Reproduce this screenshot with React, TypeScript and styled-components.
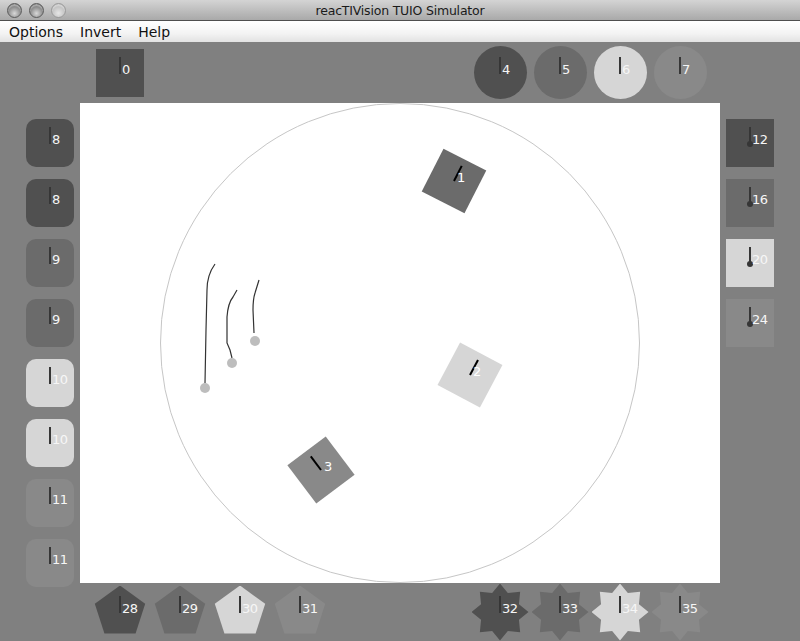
import styled, { createGlobalStyle, css } from "styled-components";

const GlobalStyle = createGlobalStyle`
  html, body {
    margin: 0;
    padding: 0;
  }
  body {
    width: 800px;
    height: 641px;
    overflow: hidden;
    background: #808080;
    font-family: "DejaVu Sans", sans-serif;
  }
`;

type Tone = "dark" | "mid" | "light" | "pale";
type Shape = "square" | "rounded" | "circle" | "pentagon" | "star";

const tones: Record<Tone, string> = {
  dark: "#505050",
  mid: "#6b6b6b",
  light: "#d6d6d6",
  pale: "#898989",
};

const sizes: Record<Shape, number> = {
  square: 48,
  rounded: 48,
  circle: 53,
  pentagon: 53,
  star: 57,
};

const polygon = (count: number, inner: number) => {
  const pts: string[] = [];
  const steps = inner === 1 ? count : count * 2;
  for (let i = 0; i < steps; i++) {
    const a = ((-90 + (i * 360) / steps) * Math.PI) / 180;
    const r = inner === 1 || i % 2 === 0 ? 1 : inner;
    pts.push(`${(50 + 50 * r * Math.cos(a)).toFixed(2)}% ${(50 + 50 * r * Math.sin(a)).toFixed(2)}%`);
  }
  return `polygon(${pts.join(", ")})`;
};

const pentagonClip = polygon(5, 1);
const starClip = polygon(8, 0.72);

const shapeStyles: Record<Shape, ReturnType<typeof css>> = {
  square: css``,
  rounded: css`border-radius: 10px;`,
  circle: css`border-radius: 50%;`,
  pentagon: css`clip-path: ${pentagonClip};`,
  star: css`clip-path: ${starClip};`,
};

/* ---------- window chrome ---------- */

const Window = styled.div`
  width: 800px;
  height: 641px;
  display: flex;
  flex-direction: column;
`;

const TitleBar = styled.div`
  height: 20px;
  border-bottom: 1px solid #4e4e4e;
  background: linear-gradient(#d4d4d4, #a9a9a9);
  display: grid;
  grid-template-columns: 1fr auto 1fr;
  align-items: center;
`;

const Lights = styled.div`
  display: flex;
  gap: 7px;
  padding-left: 7px;
`;

const Light = styled.span<{ $off?: boolean }>`
  width: 13px;
  height: 13px;
  border-radius: 50%;
  border: 0.5px solid ${(p) => (p.$off ? "#9a9a9a" : "#5c5c5c")};
  background: ${(p) =>
    p.$off
      ? "radial-gradient(circle at 50% 70%, #e6e6e6, #c4c4c4 55%, #b0b0b0)"
      : "radial-gradient(circle at 50% 72%, #d8d8d8, #8d8d8d 55%, #5e5e5e)"};
  box-shadow: inset 0 2px 1px rgba(255, 255, 255, 0.35);
`;

const Title = styled.span`
  font-family: "DejaVu Sans", sans-serif;
  font-size: 12.5px;
  color: #1a1a1a;
  letter-spacing: -0.2px;
`;

const MenuBar = styled.nav`
  height: 21px;
  background: linear-gradient(#ffffff, #f3f3f3 60%, #e2e2e2);
  display: flex;
  align-items: center;
  gap: 17px;
  padding-left: 9px;
`;

const MenuItem = styled.span`
  font-family: "DejaVu Sans", sans-serif;
  font-size: 14px;
  color: #111;
`;

/* ---------- simulator area ---------- */

const Stage = styled.main`
  height: 599px;
  background: #808080;
  display: flex;
  flex-direction: column;
`;

const TokenRow = styled.div<{ $height: number }>`
  height: ${(p) => p.$height}px;
  display: flex;
  align-items: center;
  padding-left: 90px;
`;

const SlotGroup = styled.div<{ $offset?: number }>`
  display: flex;
  width: 240px;
  margin-left: ${(p) => p.$offset ?? 0}px;
`;

const Slot = styled.div`
  width: 60px;
  display: flex;
  justify-content: center;
  align-items: center;
`;

const Middle = styled.div`
  display: flex;
  height: 480px;
`;

const SideColumn = styled.div<{ $inset: number }>`
  width: 80px;
  box-sizing: border-box;
  padding: 16px 0 0 ${(p) => p.$inset}px;
  display: flex;
  flex-direction: column;
  gap: 12px;
`;

const Token = styled.div<{ $shape: Shape; $tone: Tone }>`
  position: relative;
  width: ${(p) => sizes[p.$shape]}px;
  height: ${(p) => sizes[p.$shape]}px;
  flex-shrink: 0;
  display: grid;
  grid-template-columns: 1fr 1fr;
  grid-template-rows: 1fr 1fr;
  &::before {
    content: "";
    position: absolute;
    inset: 0;
    background: ${(p) => tones[p.$tone]};
    ${(p) => shapeStyles[p.$shape]}
  }
`;

const Marker = styled.span<{ $dot?: boolean }>`
  position: relative;
  grid-area: 1 / 1 / 2 / 2;
  justify-self: end;
  align-self: end;
  width: 2px;
  height: 17px;
  margin: 0 -1px -1px 0;
  background: #363636;
  ${(p) =>
    p.$dot &&
    css`
      &::after {
        content: "";
        position: absolute;
        left: -2px;
        bottom: -3px;
        width: 6px;
        height: 6px;
        border-radius: 50%;
        background: #363636;
      }
    `}
`;

const TokenLabel = styled.span`
  position: relative;
  grid-area: 1 / 2 / 2 / 3;
  align-self: end;
  padding-left: 2px;
  margin-bottom: -3px;
  font-family: "DejaVu Sans", sans-serif;
  font-size: 13px;
  line-height: 13px;
  letter-spacing: -0.6px;
  color: #f6f6f6;
  white-space: nowrap;
`;

const Table = styled.div`
  position: relative;
  width: 640px;
  height: 480px;
  background: #ffffff;
  overflow: hidden;
`;

const TableDrawing = styled.svg`
  position: absolute;
  inset: 0;
`;

const Fiducial = styled.div<{ $x: number; $y: number }>`
  position: absolute;
  left: ${(p) => p.$x - 24}px;
  top: ${(p) => p.$y - 24}px;
  width: 48px;
  height: 48px;
  display: grid;
  grid-template-columns: 1fr 1fr;
  grid-template-rows: 1fr 1fr;
`;

const FiducialBody = styled.div<{ $angle: number; $tone: Tone }>`
  grid-area: 1 / 1 / 3 / 3;
  background: ${(p) => tones[p.$tone]};
  transform: rotate(${(p) => p.$angle}deg);
  display: grid;
  grid-template-columns: 1fr 1fr;
  grid-template-rows: 1fr 1fr;
`;

const Heading = styled.span`
  grid-area: 1 / 1 / 2 / 2;
  justify-self: end;
  align-self: end;
  width: 2.5px;
  height: 17px;
  margin-right: -1.25px;
  background: #000;
`;

const FiducialLabel = styled(TokenLabel)`
  padding-left: 3px;
  color: #ffffff;
`;

/* ---------- data ---------- */

type TokenData = { id: number; tone: Tone };

const topLeft: TokenData[] = [{ id: 0, tone: "dark" }];
const topRight: TokenData[] = [
  { id: 4, tone: "dark" },
  { id: 5, tone: "mid" },
  { id: 6, tone: "light" },
  { id: 7, tone: "pale" },
];
const leftColumn: TokenData[] = [
  { id: 8, tone: "dark" },
  { id: 8, tone: "dark" },
  { id: 9, tone: "mid" },
  { id: 9, tone: "mid" },
  { id: 10, tone: "light" },
  { id: 10, tone: "light" },
  { id: 11, tone: "pale" },
  { id: 11, tone: "pale" },
];
const rightColumn: TokenData[] = [
  { id: 12, tone: "dark" },
  { id: 16, tone: "mid" },
  { id: 20, tone: "light" },
  { id: 24, tone: "pale" },
];
const bottomLeft: TokenData[] = [
  { id: 28, tone: "dark" },
  { id: 29, tone: "mid" },
  { id: 30, tone: "light" },
  { id: 31, tone: "pale" },
];
const bottomRight: TokenData[] = [
  { id: 32, tone: "dark" },
  { id: 33, tone: "mid" },
  { id: 34, tone: "light" },
  { id: 35, tone: "pale" },
];

const objects = [
  { id: 1, x: 374, y: 78, angle: 27, tone: "mid" as Tone },
  { id: 2, x: 390, y: 272, angle: 28, tone: "light" as Tone },
  { id: 3, x: 241, y: 367, angle: -37, tone: "pale" as Tone },
];

const cursors = [
  { x: 125, y: 285, trail: "M125,280 L126,227 L127,187 Q127,172 135,161" },
  { x: 152, y: 260, trail: "M152,255 L150,247 L147,240 L147,214 Q148,200 153,194 L157,187" },
  { x: 175, y: 238, trail: "M174,230 L173,207 Q173,196 175,190 L179,177" },
];

const TokenView = ({ t, shape, dot }: { t: TokenData; shape: Shape; dot?: boolean }) => (
  <Token $shape={shape} $tone={t.tone}>
    <Marker $dot={dot} />
    <TokenLabel>{t.id}</TokenLabel>
  </Token>
);

export default function App() {
  return (
    <>
      <GlobalStyle />
      <Window>
        <TitleBar>
          <Lights>
            <Light />
            <Light />
            <Light $off />
          </Lights>
          <Title>reacTIVision TUIO Simulator</Title>
          <span />
        </TitleBar>
        <MenuBar>
          <MenuItem>Options</MenuItem>
          <MenuItem>Invert</MenuItem>
          <MenuItem>Help</MenuItem>
        </MenuBar>
        <Stage>
          <TokenRow $height={61}>
            <SlotGroup>
              {topLeft.map((t, i) => (
                <Slot key={i}>
                  <TokenView t={t} shape="square" />
                </Slot>
              ))}
            </SlotGroup>
            <SlotGroup $offset={140}>
              {topRight.map((t, i) => (
                <Slot key={i}>
                  <TokenView t={t} shape="circle" />
                </Slot>
              ))}
            </SlotGroup>
          </TokenRow>
          <Middle>
            <SideColumn $inset={26}>
              {leftColumn.map((t, i) => (
                <TokenView key={i} t={t} shape="rounded" />
              ))}
            </SideColumn>
            <Table>
              <TableDrawing width="640" height="480" viewBox="0 0 640 480">
                <circle cx="320" cy="240" r="239.5" fill="none" stroke="#c6c6c6" strokeWidth="1" />
                {cursors.map((c, i) => (
                  <g key={i}>
                    <path d={c.trail} fill="none" stroke="#333" strokeWidth="1.2" />
                    <circle cx={c.x} cy={c.y} r="5" fill="#bdbdbd" />
                  </g>
                ))}
              </TableDrawing>
              {objects.map((o) => (
                <Fiducial key={o.id} $x={o.x} $y={o.y}>
                  <FiducialBody $angle={o.angle} $tone={o.tone}>
                    <Heading />
                  </FiducialBody>
                  <FiducialLabel>{o.id}</FiducialLabel>
                </Fiducial>
              ))}
            </Table>
            <SideColumn $inset={6}>
              {rightColumn.map((t, i) => (
                <TokenView key={i} t={t} shape="square" dot />
              ))}
            </SideColumn>
          </Middle>
          <TokenRow $height={58}>
            <SlotGroup>
              {bottomLeft.map((t, i) => (
                <Slot key={i}>
                  <TokenView t={t} shape="pentagon" />
                </Slot>
              ))}
            </SlotGroup>
            <SlotGroup $offset={140}>
              {bottomRight.map((t, i) => (
                <Slot key={i}>
                  <TokenView t={t} shape="star" />
                </Slot>
              ))}
            </SlotGroup>
          </TokenRow>
        </Stage>
      </Window>
    </>
  );
}
